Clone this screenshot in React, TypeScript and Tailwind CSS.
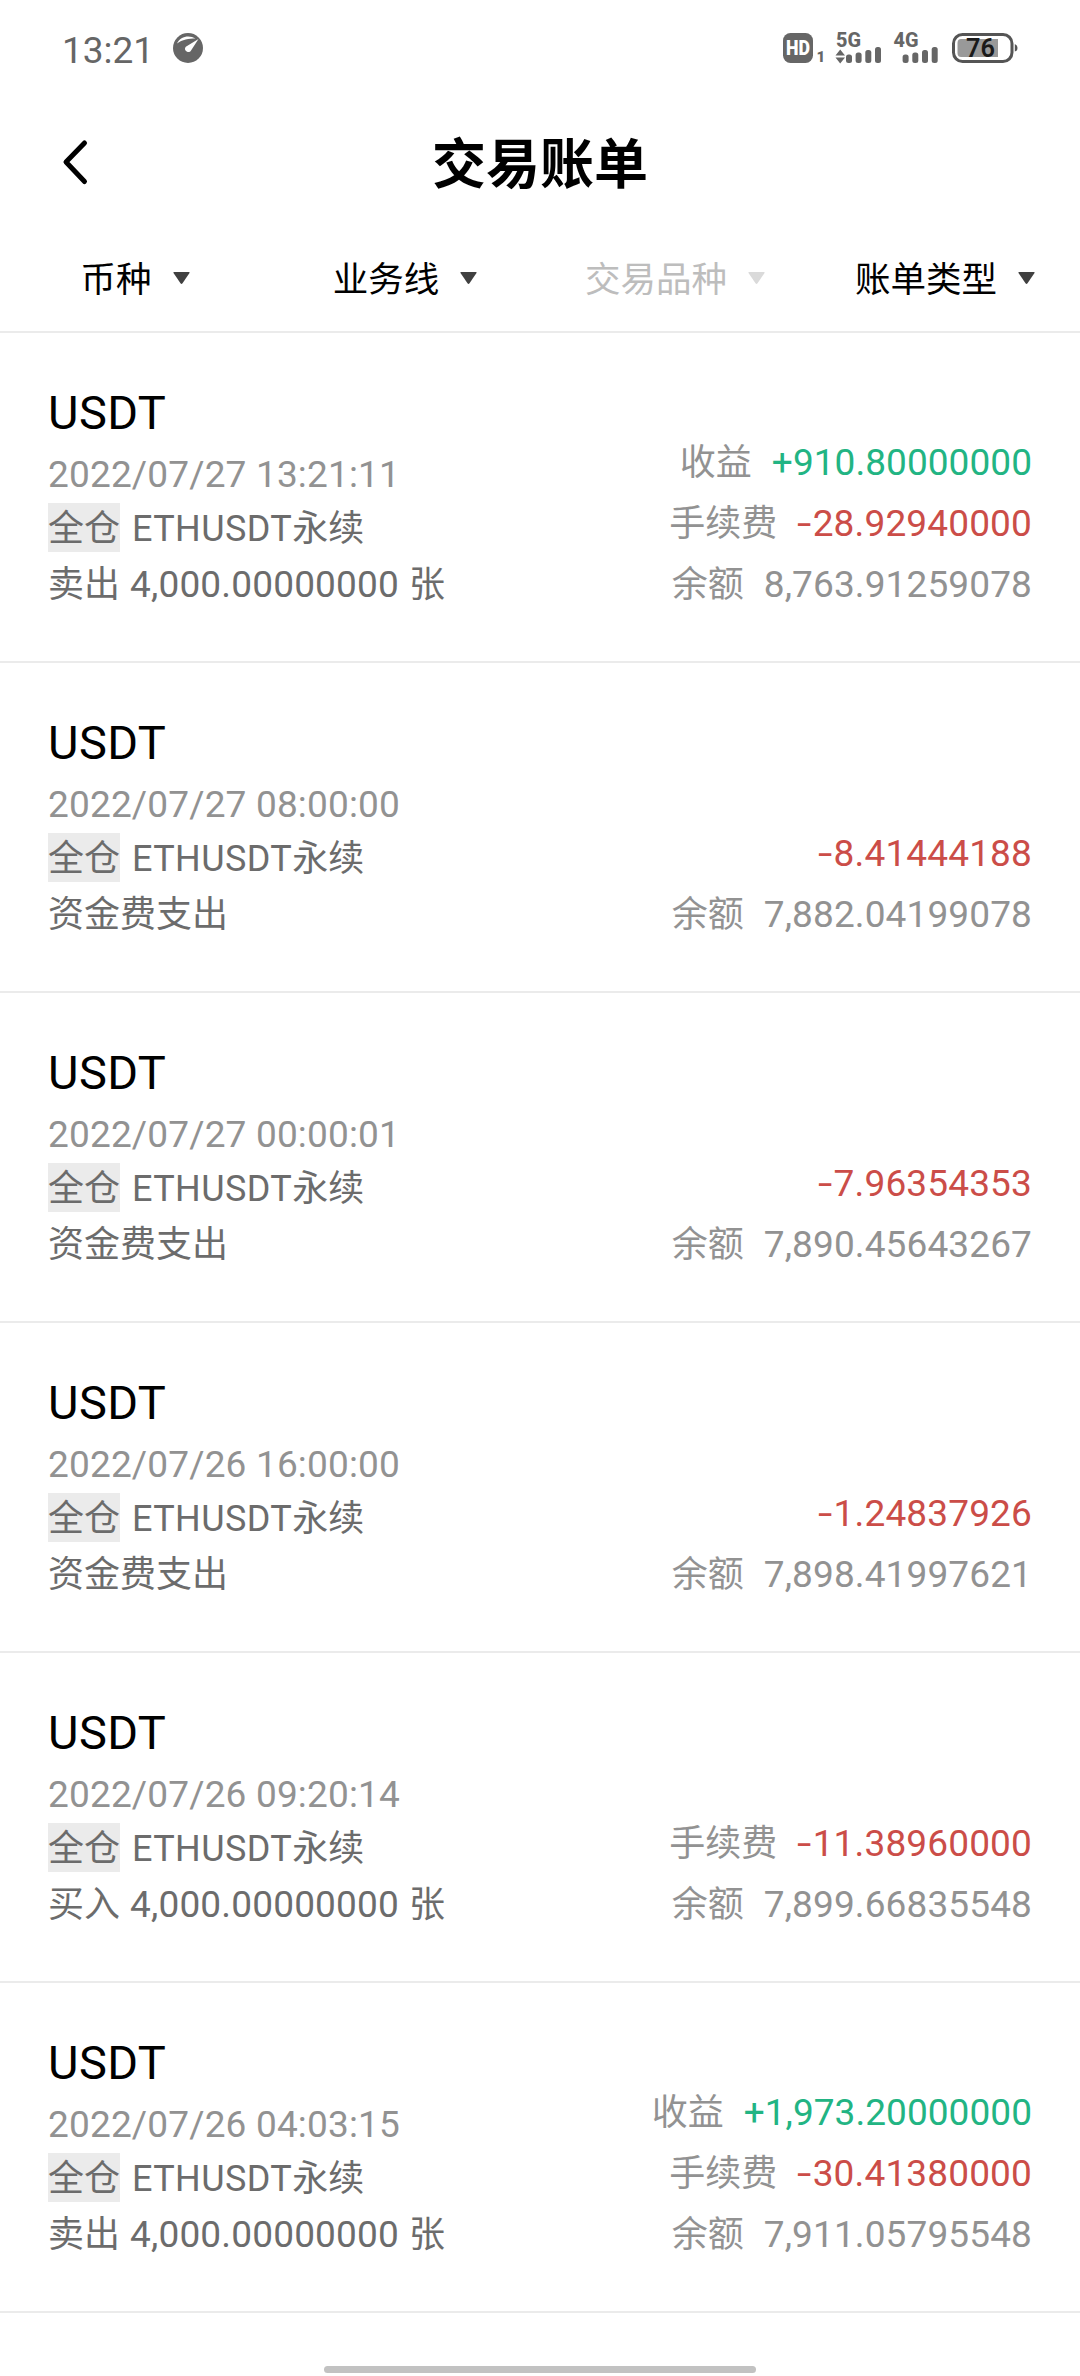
import React from 'react';

interface Amount {
  label?: string;
  value: string;
  tone: 'up' | 'down' | 'plain';
}

interface Bill {
  time: string;
  action: string;
  quantity?: string;
  amounts: Amount[];
}

const bills: Bill[] = [
  {
    time: '2022/07/27 13:21:11',
    action: '卖出',
    quantity: '4,000.00000000',
    amounts: [
      { label: '收益', value: '+910.80000000', tone: 'up' },
      { label: '手续费', value: '-28.92940000', tone: 'down' },
      { label: '余额', value: '8,763.91259078', tone: 'plain' },
    ],
  },
  {
    time: '2022/07/27 08:00:00',
    action: '资金费支出',
    amounts: [
      { value: '-8.41444188', tone: 'down' },
      { label: '余额', value: '7,882.04199078', tone: 'plain' },
    ],
  },
  {
    time: '2022/07/27 00:00:01',
    action: '资金费支出',
    amounts: [
      { value: '-7.96354353', tone: 'down' },
      { label: '余额', value: '7,890.45643267', tone: 'plain' },
    ],
  },
  {
    time: '2022/07/26 16:00:00',
    action: '资金费支出',
    amounts: [
      { value: '-1.24837926', tone: 'down' },
      { label: '余额', value: '7,898.41997621', tone: 'plain' },
    ],
  },
  {
    time: '2022/07/26 09:20:14',
    action: '买入',
    quantity: '4,000.00000000',
    amounts: [
      { label: '手续费', value: '-11.38960000', tone: 'down' },
      { label: '余额', value: '7,899.66835548', tone: 'plain' },
    ],
  },
  {
    time: '2022/07/26 04:03:15',
    action: '卖出',
    quantity: '4,000.00000000',
    amounts: [
      { label: '收益', value: '+1,973.20000000', tone: 'up' },
      { label: '手续费', value: '-30.41380000', tone: 'down' },
      { label: '余额', value: '7,911.05795548', tone: 'plain' },
    ],
  },
];

const filters = [
  { name: '币种', disabled: false },
  { name: '业务线', disabled: false },
  { name: '交易品种', disabled: true },
  { name: '账单类型', disabled: false },
];

const toneClass = {
  up: 'text-[#22b483] tracking-[0.05px]',
  down: 'text-[#cb4d48] tracking-[0.15px]',
  plain: 'text-[#929292] tracking-[0.12px]',
};

function StatusBar() {
  return (
    <div className="flex h-24 shrink-0 items-center px-[62px] text-[#666]">
      <span className="mt-1 w-[111px] text-[37px] leading-none">13:21</span>
      <svg className="h-[30px] w-[30px]" viewBox="0 0 30 30">
        <circle cx="15" cy="15" r="15" fill="#666" />
        <path d="M4 10.500C7 3.500 16 1.500 22.500 5.500C16 5.500 9 6.500 4 10.500Z" fill="#fff" />
        <path d="M25.500 6L18.200 17.200A3.200 3.200 0 1 1 12.800 13.800Z" fill="#fff" />
      </svg>
      <svg className="ml-auto h-9 w-[236px]" viewBox="782 30 236 36" fontFamily="Roboto, sans-serif">
        <rect x="783" y="33" width="30" height="30" rx="7.500" fill="#666" />
        <text x="786" y="55" fontSize="20" fontWeight="900" fill="#fff" textLength="24" lengthAdjust="spacingAndGlyphs">HD</text>
        <text x="816.500" y="62" fontSize="15" fontWeight="900" fill="#666">1</text>
        <text x="836" y="47" fontSize="19.500" fontWeight="800" fill="#666" textLength="25" lengthAdjust="spacingAndGlyphs">5G</text>
        <path d="M835.500 55.500L840.200 49.500L845 55.500ZM835.500 57.500L840.200 63.500L845 57.500Z" fill="#666" />
        <g fill="#666">
          <rect x="846" y="54.500" width="6" height="8.500" rx="2.500" />
          <rect x="855.600" y="52.500" width="6" height="10.500" rx="2.500" />
          <rect x="865.300" y="50" width="6" height="13" rx="2.500" />
          <rect x="875" y="47" width="6" height="16" rx="2.500" />
          <rect x="902.600" y="54.500" width="6" height="8.500" rx="2.500" />
          <rect x="912.300" y="52.500" width="6" height="10.500" rx="2.500" />
          <rect x="922" y="50" width="6" height="13" rx="2.500" />
          <rect x="931.700" y="47" width="6" height="16" rx="2.500" />
        </g>
        <text x="893.500" y="47" fontSize="19.500" fontWeight="800" fill="#666" textLength="25" lengthAdjust="spacingAndGlyphs">4G</text>
        <rect x="953.500" y="34.500" width="58.500" height="27" rx="9" fill="none" stroke="#555" strokeWidth="3" />
        <path d="M961 39H998V57H961Q957.500 57 957.500 53V43Q957.500 39 961 39Z" fill="#999" />
        <path d="M1014.800 44Q1017.500 45 1017.500 48T1014.800 51.500Z" fill="#555" />
        <text x="966" y="57" fontSize="25" fontWeight="600" fill="#1a1a1a" textLength="29" lengthAdjust="spacingAndGlyphs">76</text>
      </svg>
    </div>
  );
}

function Header() {
  return (
    <div className="grid h-[132px] shrink-0 grid-cols-[1fr_auto_1fr] items-center">
      <svg className="ml-[60px] h-12 w-8" viewBox="0 0 32 48" fill="none" stroke="#000" strokeWidth="5" strokeLinecap="round" strokeLinejoin="round">
        <path d="M24.500 5L6 24L24.500 43.500" />
      </svg>
      <h1 className="pt-[7px] text-[54px] leading-none font-bold text-black">交易账单</h1>
    </div>
  );
}

function FilterBar() {
  return (
    <div className="grid h-[105px] shrink-0 grid-cols-4 border-b-2 border-[#ebebeb] pb-1">
      {filters.map((filter) => (
        <button
          key={filter.name}
          className={`flex items-center justify-center gap-[21px] text-[35.5px] leading-none ${filter.disabled ? 'text-[#bdbdbd]' : 'text-black'}`}
        >
          <span className="pt-[6px]">{filter.name}</span>
          <svg className="h-3 w-[17px]" viewBox="0 0 17 12" fill={filter.disabled ? '#dadada' : '#404040'}>
            <path d="M1 0H16Q17 0 16.500 1L9.500 11.300Q8.500 12.500 7.500 11.300L.5 1Q0 0 1 0Z" />
          </svg>
        </button>
      ))}
    </div>
  );
}

function AmountValue({ amount }: { amount: Amount }) {
  const negative = amount.value.startsWith('-');
  return (
    <span className={toneClass[amount.tone]}>
      {negative && <span className="mr-[3px] ml-[2px] inline-block scale-x-140">-</span>}
      {negative ? amount.value.slice(1) : amount.value}
    </span>
  );
}

function BillRow({ bill }: { bill: Bill }) {
  return (
    <div className="flex h-[330px] shrink-0 justify-between border-b-2 border-[#ebebeb] px-12 pt-[50px]">
      <div className="text-4xl text-[#6c6c6c]">
        <div className="h-[60px] text-[47px] leading-[60px] tracking-[0.4px] text-black">USDT</div>
        <div className="h-[60px] text-[37px] leading-[64px] tracking-[0.17px] text-[#929292]">{bill.time}</div>
        <div className="flex h-[49px]">
          <span className="h-[49px] bg-[#ebebeb] leading-[53px]">全仓</span>
          <span className="ml-3 leading-[53px]">
            <span className="tracking-[0.4px]">ETHUSDT</span>永续
          </span>
        </div>
        <div className="mt-[8px] flex h-[49px] items-center gap-[10px]">
          <span>{bill.action}</span>
          {bill.quantity && (
            <>
              <span className="text-[37px] tracking-[0.17px]">{bill.quantity}</span>
              <span>张</span>
            </>
          )}
        </div>
      </div>
      <div className="flex h-[232px] flex-col justify-end">
        {bill.amounts.map((amount) => (
          <div key={amount.value} className="flex h-[61px] items-center justify-end gap-5 text-[37px]">
            {amount.label && <span className="text-4xl text-[#929292]">{amount.label}</span>}
            <AmountValue amount={amount} />
          </div>
        ))}
      </div>
    </div>
  );
}

export default function App() {
  return (
    <div className="relative flex h-[2376px] w-[1080px] flex-col overflow-hidden bg-white font-[Roboto,'Noto_Sans_CJK_SC',sans-serif]">
      <StatusBar />
      <Header />
      <FilterBar />
      {bills.map((bill) => (
        <BillRow key={bill.time} bill={bill} />
      ))}
      <div className="shrink-0 px-12 pt-[50px] text-[47px] leading-[60px] tracking-[0.4px] text-black">USDT</div>
      <div className="absolute bottom-[3px] left-[324px] h-[7px] w-[432px] rounded-full bg-[#c2c2c2]" />
    </div>
  );
}
